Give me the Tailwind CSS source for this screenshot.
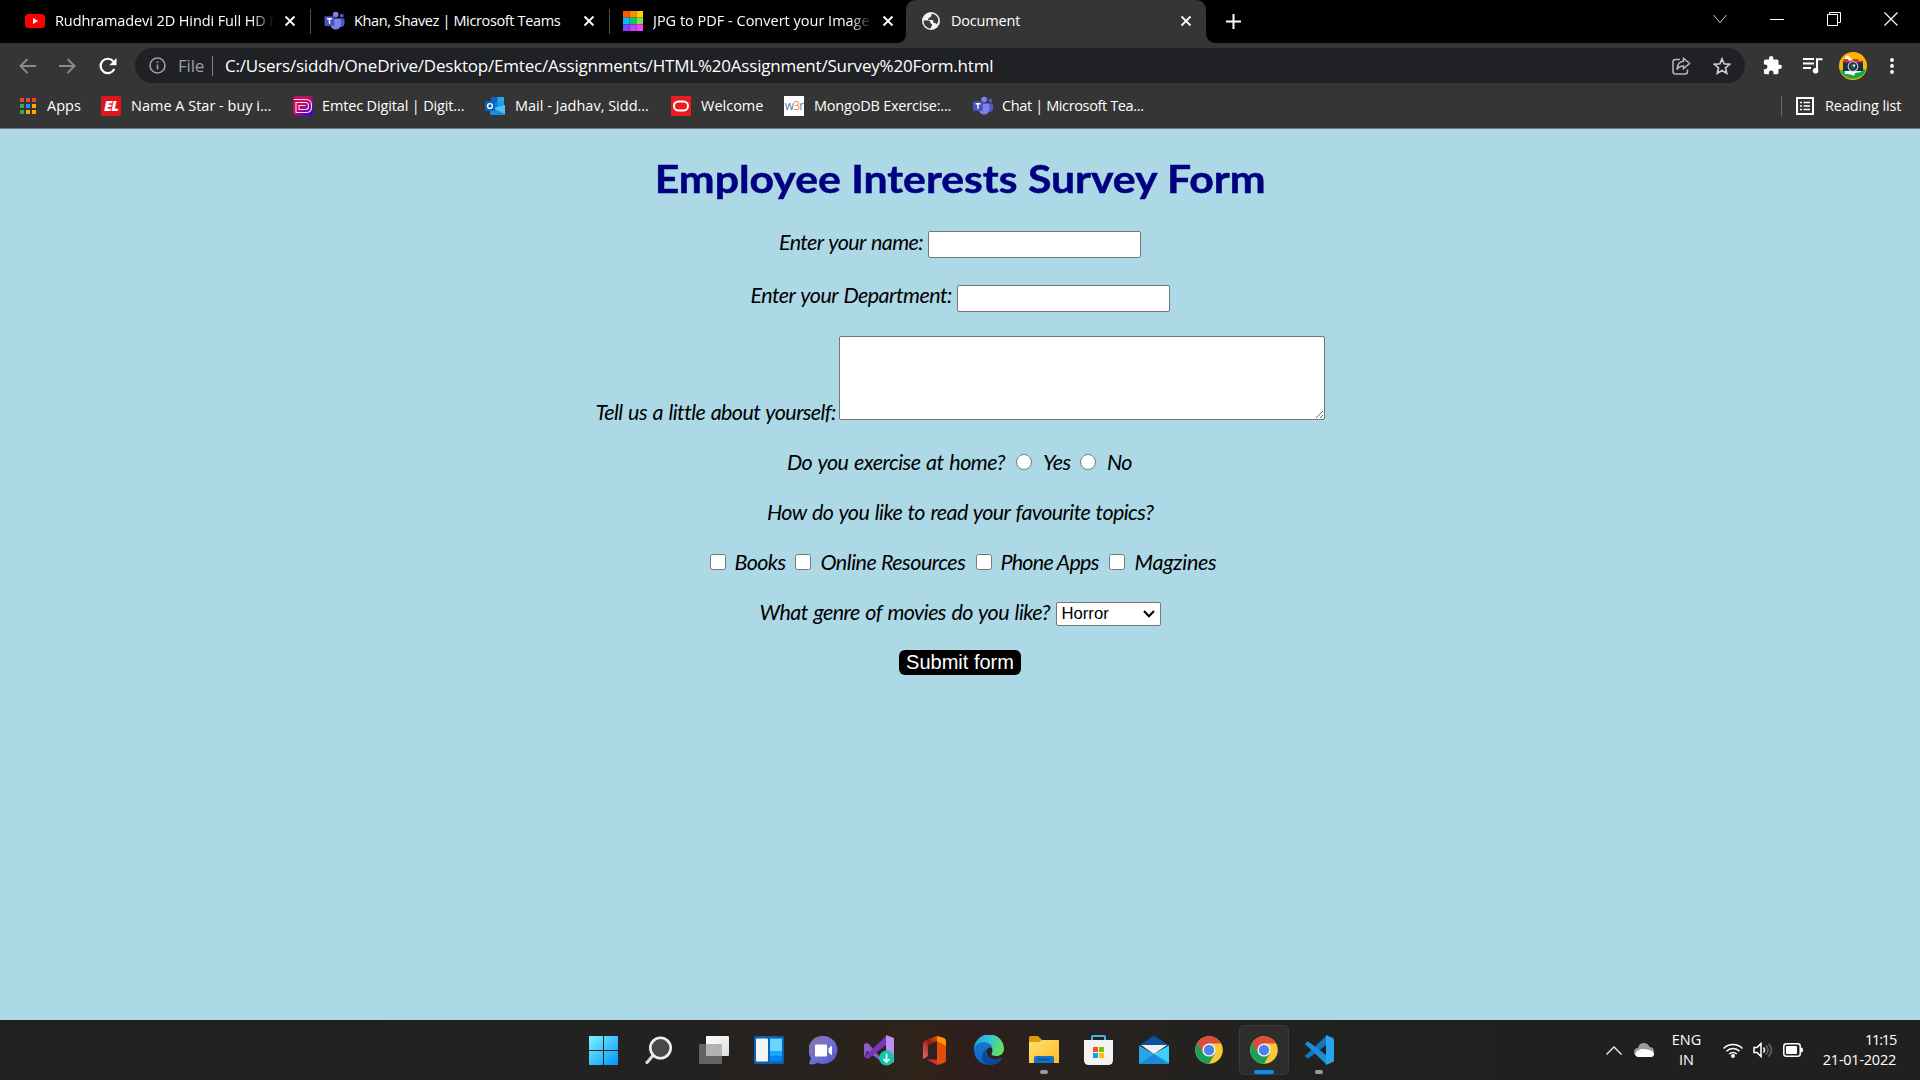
<!DOCTYPE html>
<html lang="en">
<head>
<meta charset="utf-8">
<title>Document</title>
<script src="https://cdn.jsdelivr.net/npm/@tailwindcss/browser@4"></script>
</head>
<body class="w-[1920px] h-[1080px] overflow-hidden flex flex-col bg-[#add8e6] font-['Open_Sans',sans-serif] text-white">

<svg class="hidden">
  <defs>
    <symbol id="teams" viewBox="0 0 20 20">
      <circle cx="17.3" cy="4.7" r="1.9" fill="#5059c9"/><path d="M14 7.6h5.2c.5 0 .8.3.8.8v4.4a3.2 3.2 0 0 1-5 2.6z" fill="#5059c9"/>
      <circle cx="11.2" cy="3.6" r="2.8" fill="#7b83eb"/><path d="M6.5 7.6h9c.5 0 .8.4.8.9v5.6a5.2 5.2 0 0 1-10.3 0z" fill="#7b83eb"/>
      <rect x="0" y="5.2" width="9.8" height="9.8" rx="1" fill="#4b53bc"/><path d="M2.6 7.8h4.8M5 7.8v5" stroke="#fff" stroke-width="1.4"/>
    </symbol>
    <symbol id="close" viewBox="0 0 12 12"><path d="M1.5 1.5l9 9M10.5 1.5l-9 9" stroke="#fff" stroke-width="1.8"/></symbol>
    <symbol id="chrome" viewBox="0 0 28 28">
      <circle cx="14" cy="14" r="13.8" fill="#f8c935"/>
      <path d="M14 14L2.05 7.1A13.8 13.8 0 0 0 14 27.8L20 17.4z" fill="#1c9f54"/>
      <path d="M14 7.5h12.2A13.8 13.8 0 0 0 2.05 7.1l6.1 10z" fill="#dd4b3e"/>
      <circle cx="14" cy="14" r="6.6" fill="#f4f6fb"/><circle cx="14" cy="14" r="5.2" fill="#4a86ee"/>
    </symbol>
  </defs>
</svg>

<!-- Tab strip -->
<div class="flex h-[43px] bg-black text-[14.5px] leading-[20px] shrink-0">
  <div class="flex w-[310px] h-[42px] items-center pl-[25px]">
    <svg class="w-5 h-[14px] shrink-0" viewBox="0 0 20 14"><rect width="20" height="14" rx="3.5" fill="#f00"/><path d="M8 4l5 3-5 3z" fill="#fff"/></svg>
    <span class="ml-[10px] w-[219px] overflow-hidden whitespace-nowrap tracking-[-0.1px] mask-r-from-90%">Rudhramadevi 2D Hindi Full HD M</span>
    <svg class="ml-[10px] w-3 h-3 shrink-0"><use href="#close"/></svg>
  </div>
  <div class="w-px h-[25px] mt-[9px] bg-[#505050]"></div>
  <div class="flex w-[298px] h-[42px] items-center pl-[13px]">
    <svg class="w-[21px] h-5 shrink-0"><use href="#teams"/></svg>
    <span class="ml-[9px] w-[219px] overflow-hidden whitespace-nowrap tracking-[-0.36px]">Khan, Shavez | Microsoft Teams</span>
    <svg class="ml-[10px] w-3 h-3 shrink-0"><use href="#close"/></svg>
  </div>
  <div class="w-px h-[25px] mt-[9px] bg-[#505050]"></div>
  <div class="flex w-[287px] h-[42px] items-center pl-[13px]">
    <svg class="w-5 h-5 shrink-0" viewBox="0 0 21 21"><path fill="#ff5a00" d="M0 0h7v7H0z"/><path fill="#ff8c00" d="M7 0h7v7H7z"/><path fill="#ffd000" d="M14 0h7v7h-7z"/><path fill="#00bfff" d="M0 7h7v7H0z"/><path fill="#00cc66" d="M7 7h7v7H7z"/><path fill="#7fe04c" d="M14 7h7v7h-7z"/><path fill="#8040ff" d="M0 14h7v7H0z"/><path fill="#bf40ff" d="M7 14h7v7H7z"/><path fill="#f040ff" d="M14 14h7v7h-7z"/></svg>
    <span class="ml-[10px] w-[219px] overflow-hidden whitespace-nowrap mask-r-from-90%">JPG to PDF - Convert your Image</span>
    <svg class="ml-[10px] w-3 h-3 shrink-0"><use href="#close"/></svg>
  </div>
  <div class="relative flex w-[309px] h-[43px] items-center pl-[25px] pb-px">
    <svg class="absolute left-0 top-0 w-[319px] h-[43px]" viewBox="0 0 319 43"><path d="M0 43c6 0 9-4 9-10V10C9 4 13 0 19 0h280c6 0 10 4 10 10v23c0 6 4 10 10 10z" fill="#353535"/></svg>
    <svg class="relative w-[18px] h-[18px] shrink-0" viewBox="0 0 18 18"><circle cx="9" cy="9" r="9" fill="#f4f4f4"/><path d="M1.600 8.500H6q2.500 0 2.500 2.200 0 1.300 1.500 1.300v1.500l-1 1.500v1.300C4.500 16.500 1.500 13 1.600 8.500zM9.500 1.800v1.700q0 1.500-2 1.500v1.500H6V8h4q1.500 0 1.500 1.500V11h1.500q1 0 1.500 1.500 2-2 1.900-4.500C16 4.500 13 2 9.500 1.800z" fill="#3c3c3c"/></svg>
    <span class="relative ml-[11px] w-[219px] overflow-hidden whitespace-nowrap tracking-[-0.2px]">Document</span>
    <svg class="relative ml-[10px] w-3 h-3 shrink-0"><use href="#close"/></svg>
  </div>
  <svg class="ml-[20px] mt-[14px] w-[15px] h-[15px]" viewBox="0 0 15 15"><path d="M7.500 0v15M0 7.500h15" stroke="#fff" stroke-width="2"/></svg>
  <div class="ml-auto flex h-[37px] items-center gap-[43px] pr-[22px]">
    <svg class="w-[14px] h-[14px]" viewBox="0 0 14 14" fill="none" stroke="#ccc"><path d="M.5 3L7 10.500 13.500 3"/></svg>
    <svg class="w-[14px] h-[14px]" viewBox="0 0 14 14" stroke="#fff"><path d="M0 7.500h14"/></svg>
    <svg class="w-[14px] h-[14px]" viewBox="0 0 14 14" fill="none" stroke="#fff"><path d="M.5 2.500h10v11H.5zM2.500 2.500V.5h11v10h-3"/></svg>
    <svg class="w-[14px] h-[14px]" viewBox="0 0 14 14" stroke="#fff" stroke-width="1.200"><path d="M.5.5l13 13M13.500.5l-13 13"/></svg>
  </div>
</div>

<!-- Address bar -->
<div class="flex h-[45px] items-center bg-[#353535] pl-[19px] shrink-0">
  <svg class="w-[17px] h-4" viewBox="0 0 17 16" fill="none" stroke="#8b8b8b" stroke-width="1.900"><path d="M17 8H1.500M8.500 1L1.500 8l7 7"/></svg>
  <svg class="ml-[23px] w-[17px] h-4" viewBox="0 0 17 16" fill="none" stroke="#8b8b8b" stroke-width="1.900"><path d="M0 8h15.500M8.500 1l7 7-7 7"/></svg>
  <svg class="ml-[23px] w-[18px] h-[18px]" viewBox="0 0 18 18" fill="none"><path d="M15.300 12A7.200 7.200 0 1 1 14.200 4.200" stroke="#fff" stroke-width="2.200"/><path d="M17.500 1v7.200h-7.200z" fill="#fff"/></svg>
  <div class="ml-[18px] flex w-[1610px] h-[35px] items-center rounded-full bg-[#202124] text-[17px] leading-[24px]">
    <svg class="ml-[14px] w-[17px] h-[17px]" viewBox="0 0 17 17" fill="none" stroke="#9aa0a6" stroke-width="1.600"><circle cx="8.500" cy="8.500" r="7.500"/><path d="M8.500 7.500v5M8.500 4.300v1.800"/></svg>
    <span class="ml-[12px] w-[26px] whitespace-nowrap tracking-[-0.2px] text-[#9aa0a6]">File</span>
    <div class="ml-[8px] w-px h-5 bg-[#80868b]"></div>
    <span class="ml-[12px] w-[768px] whitespace-nowrap tracking-[-0.2px]">C:/Users/siddh/OneDrive/Desktop/Emtec/Assignments/HTML%20Assignment/Survey%20Form.html</span>
    <svg class="ml-auto w-[19px] h-[18px]" viewBox="0 0 19 18" fill="none" stroke="#b8b8b8" stroke-width="1.500"><path d="M8 2.500H3.500Q1 2.500 1 5v9.500Q1 17 3.500 17h9.500q2.500 0 2.500-2.500V12.500"/><path d="M11.500 1.300L17.500 6.500l-6 5.200V8.900C8.500 8.900 6.500 10 5 12.500 5.300 8 7.500 4.500 11.500 4.200z"/></svg>
    <svg class="ml-[22px] mr-[14px] w-[18px] h-[18px]" viewBox="0 0 18 18" fill="none" stroke="#c8c8c8" stroke-width="1.700"><path d="M9 1.800l2.100 5 5.500.5-4.100 3.600 1.200 5.300L9 13.400l-4.700 2.800 1.200-5.300-4.100-3.600 5.500-.5z"/></svg>
  </div>
  <svg class="ml-[18px] w-[19px] h-[19px]" viewBox="1 1 22 22" fill="#fff"><path d="M20.500 11H19V7a2 2 0 0 0-2-2h-4V3.500a2.500 2.500 0 0 0-5 0V5H4a2 2 0 0 0-2 2v3.800h1.500a2.700 2.700 0 0 1 0 5.400H2V20a2 2 0 0 0 2 2h3.800v-1.500a2.700 2.700 0 0 1 5.400 0V22H17a2 2 0 0 0 2-2v-4h1.500a2.500 2.500 0 0 0 0-5z"/></svg>
  <svg class="ml-[21px] w-[20px] h-[18px]" viewBox="0 0 20 18"><path d="M0 2h11M0 6.500h11M0 11h8M14 13V2.200h5.500" stroke="#fff" stroke-width="2.100" fill="none"/><circle cx="12.600" cy="13.800" r="2.800" fill="#fff"/></svg>
  <svg class="ml-[16px] w-[28px] h-[28px]" viewBox="0 0 28 28"><circle cx="14" cy="14" r="14" fill="#ffb400"/><path d="M1 18q6 0 9 5l8-3q4-4 9-2a14 14 0 0 1-26 0z" fill="#0cab50"/><path d="M5 7l3-3.500 3 1.500 2 3 9 0 2 4-2 8-6 1-1 3-4-2-5 0z" fill="#fff"/><path d="M4 9h20v10H4z" fill="#13314b"/><path d="M4.500 7h4l1 1.500h4L14 7h5l1 1.500h3.500V11h-19z" fill="#d8323c"/><path d="M4 10.500h20v2H4z" fill="#13314b"/><circle cx="14" cy="14.500" r="4.800" fill="#13314b" stroke="#d9c7b2" stroke-width="1.100"/><circle cx="14" cy="14.500" r="2.600" fill="#27506e"/><circle cx="15" cy="13.500" r="1.300" fill="#e8e2c8"/></svg>
  <svg class="ml-[23px] w-1 h-4" viewBox="0 0 4 16" fill="#fff"><circle cx="2" cy="2" r="1.900"/><circle cx="2" cy="8" r="1.900"/><circle cx="2" cy="14" r="1.900"/></svg>
</div>

<!-- Bookmarks -->
<div class="flex h-[41px] items-center bg-[#353535] border-b border-[#70777a] pl-5 pb-1 text-[14.5px] leading-5 whitespace-nowrap shrink-0">
  <svg class="w-4 h-4" viewBox="0 0 16 16"><path fill="#ea4335" d="M0 0h4v4H0zM6 0h4v4H6zM12 0h4v4h-4z"/><path fill="#34a853" d="M0 6h4v4H0zM0 12h4v4H0z"/><path fill="#1a8cff" d="M6 6h4v4H6z"/><path fill="#fbab00" d="M12 6h4v4h-4zM6 12h4v4H6zM12 12h4v4h-4z"/></svg>
  <span class="ml-[11px] w-[34px]">Apps</span>
  <div class="ml-[20px] w-5 h-5 rounded-[2px] bg-[#e0161b] text-center font-['Open_Sans',sans-serif] text-[14.5px] font-extrabold italic leading-5 tracking-[-0.8px]">EL</div>
  <span class="ml-[10px] w-[140px]">Name A Star - buy i...</span>
  <svg class="ml-[22px] w-5 h-5" viewBox="0 0 20 20"><defs><linearGradient id="em" x1="0" y1="0" x2="1" y2="1"><stop offset=".4" stop-color="#c4105a"/><stop offset="1" stop-color="#2000f0"/></linearGradient></defs><rect width="20" height="20" rx="3" fill="url(#em)"/><path d="M1 3.500h12q5.500 0 5.500 5.500v2q0 5.500-5.500 5.500H3V6.500h9.500q3 0 3 3v1q0 3-3 3H6V9.500h6.500" fill="none" stroke="#ffd9ec" stroke-width="1.100"/></svg>
  <span class="ml-[9px] w-[142px] tracking-[-0.15px]">Emtec Digital | Digit...</span>
  <svg class="ml-[21px] w-5 h-[18px]" viewBox="0 0 20 18"><path d="M6 0h13v11H6z" fill="#0a66b8"/><path d="M12.500 0H19v6h-6.500z" fill="#28a8ea"/><path d="M6 5h6.500v6H6z" fill="#0f78d4"/><path d="M12.500 5H19v5h-6.500z" fill="#1b9de2"/><path d="M5 17V8l7.500 4L20 8v9q0 1-1 1H6q-1 0-1-1z" fill="#1490df"/><path d="M20 8v9l-12-6z" fill="#50c0f5"/><rect y="4" width="10" height="10" rx="1" fill="#0a64ba"/><circle cx="5" cy="9" r="2.400" fill="none" stroke="#fff" stroke-width="1.400"/></svg>
  <span class="ml-[10px] w-[135px]">Mail - Jadhav, Sidd...</span>
  <svg class="ml-[21px] w-5 h-5" viewBox="0 0 20 20"><path fill="#ea1b22" d="M0 0h20v20H0z"/><rect x="3" y="5.500" width="14" height="9" rx="4.500" fill="none" stroke="#fff" stroke-width="2"/></svg>
  <span class="ml-[10px] w-[62px]">Welcome</span>
  <div class="ml-[21px] w-5 h-5 bg-white text-center text-[12px] leading-[19px] tracking-[-0.8px] text-[#557aa8]">w<span class="text-[#ef8b4e]">3</span>r</div>
  <span class="ml-[10px] w-[137px] tracking-[-0.22px]">MongoDB Exercise:...</span>
  <svg class="ml-[22px] w-5 h-5"><use href="#teams"/></svg>
  <span class="ml-[9px] w-[143px] tracking-[-0.37px]">Chat | Microsoft Tea...</span>
  <div class="ml-auto w-px h-5 bg-[#6a6a6a]"></div>
  <svg class="ml-[14px] w-[18px] h-[18px]" viewBox="0 0 18 18" fill="none" stroke="#fff" stroke-width="2"><path d="M1 1h16v16H1z"/><path d="M4 5.500h2M4 9h2M4 12.500h2M7.500 5.500H14M7.500 9H14M7.500 12.500H14" stroke-width="1.700"/></svg>
  <span class="ml-[11px] w-[77px] mr-[18px] tracking-[-0.1px]">Reading list</span>
</div>

<!-- Survey page -->
<main class="flex grow flex-col pt-[21px] font-['Lato',sans-serif] text-[21.5px] italic leading-[22px] tracking-[-0.6px] [word-spacing:1.2px] text-black whitespace-nowrap">
  <h1 class="flex h-[56px] items-center justify-center text-[38.5px] font-bold not-italic leading-[56px] tracking-normal [word-spacing:0px] text-[#000080]"><span class="inline-block scale-x-[1.11] [-webkit-text-stroke:0.5px_#000080]">Employee Interests Survey Form</span></h1>
  <div class="mt-[25px] flex h-[53px] justify-center"><label class="w-[145px]">Enter your name:</label><input class="ml-[4px] w-[213px] h-[27px] rounded-[2px] border border-[#767676] bg-white"></div>
  <div class="flex h-[52px] justify-center"><label class="w-[202px] tracking-[-0.52px]">Enter your Department:</label><input class="ml-[4px] mt-px w-[213px] h-[27px] rounded-[2px] border border-[#767676] bg-white"></div>
  <div class="flex h-[115px] justify-center"><label class="mt-[65px] w-[240px]">Tell us a little about yourself:</label><textarea class="ml-[3px] w-[486px] h-[84px] rounded-[2px] border border-[#767676] bg-white resize"></textarea></div>
  <div class="flex h-[50px] justify-center"><span class="w-[217px] tracking-[-0.54px]">Do you exercise at home?</span><input type="radio" class="ml-[12px] mt-[3px] w-4 h-4"><label class="ml-[11px] w-[27px]">Yes</label><input type="radio" class="ml-[10px] mt-[3px] w-4 h-4"><label class="ml-[11px] w-[26px]">No</label></div>
  <div class="flex h-[50px] justify-center"><span class="w-[386px]">How do you like to read your favourite topics?</span></div>
  <div class="flex h-[50px] justify-center [word-spacing:0px]"><input type="checkbox" class="ml-[6px] mt-[3px] w-4 h-4"><label class="ml-[9px] w-[50px] tracking-[-0.6px]">Books</label><input type="checkbox" class="ml-[10px] mt-[3px] w-4 h-4"><label class="ml-[10px] w-[144px] tracking-[-0.48px]">Online Resources</label><input type="checkbox" class="ml-[11px] mt-[3px] w-4 h-4"><label class="ml-[9px] w-[98px] tracking-[-0.75px]">Phone Apps</label><input type="checkbox" class="ml-[10px] mt-[3px] w-4 h-4"><label class="ml-[10px] w-[82px] tracking-[-0.25px]">Magzines</label></div>
  <div class="flex h-[49px] justify-center"><span class="w-[290px] tracking-[-0.57px]">What genre of movies do you like?</span>
    <div class="ml-[6px] mt-px flex w-[105px] h-[24px] items-center justify-between rounded-[2px] border border-[#767676] bg-white pl-[5px] pr-[5px] font-['Liberation_Sans',sans-serif] text-[16.67px] not-italic tracking-normal"><span>Horror</span><svg class="w-[12px] h-[8px]" viewBox="0 0 12 8" fill="none" stroke="#000" stroke-width="2"><path d="M1 1l5 5.300L11 1"/></svg></div></div>
  <div class="flex justify-center"><button class="flex w-[122px] h-[25px] justify-center rounded-[6px] bg-black font-['Liberation_Sans',sans-serif] text-[20px] not-italic leading-[24px] tracking-normal [word-spacing:0px] text-white">Submit form</button></div>
</main>

<!-- Taskbar -->
<footer class="flex h-[60px] shrink-0 bg-[linear-gradient(90deg,#202020_0,#222221_600px,#26221f_800px,#2f2319_915px,#2e1f1d_970px,#28221f_1050px,#222220_1250px,#202020_1500px)]">
  <div class="ml-[576px] flex items-center [&>div]:flex [&>div]:w-[55px] [&>div]:h-[60px] [&>div]:items-center [&>div]:justify-center">
    <div><svg class="w-[29px] h-[29px]" viewBox="0 0 29 29"><defs><linearGradient id="wi" gradientUnits="userSpaceOnUse" x1="0" y1="0" x2="29" y2="29"><stop stop-color="#7df3ff"/><stop offset="1" stop-color="#0095f8"/></linearGradient></defs><path d="M0 0h14v14H0zM15 0h14v14H15zM0 15h14v14H0zM15 15h14v14H15z" fill="url(#wi)"/></svg></div>
    <div><svg class="w-[28px] h-[28px]" viewBox="0 0 28 28"><path d="M2 26.500L8 19.500" stroke="#d5d9db" stroke-width="3.200" stroke-linecap="round"/><circle cx="15.500" cy="12" r="10.200" fill="#484848" stroke="#eef0f0" stroke-width="2.600"/></svg></div>
    <div><svg class="w-[30px] h-[28px]" viewBox="0 0 30 28"><defs><linearGradient id="tv" x2="1" y2="1"><stop stop-color="#fff"/><stop offset="1" stop-color="#ddd"/></linearGradient></defs><rect y="8" width="23" height="20" rx="1" fill="#636363"/><rect x="7" width="23" height="20" rx="1" fill="url(#tv)"/><path d="M7 8h16v12H7z" fill="#b2b2b2"/></svg></div>
    <div><svg class="w-[30px] h-[28px]" viewBox="0 0 30 28"><rect width="30" height="28" rx="1.500" fill="#0b62b4"/><rect x="2" y="2.500" width="12" height="23" rx="1" fill="#f2f4f6"/><path d="M16 2.500h12V15H16z" fill="#66d5ff"/><path d="M16 15h12v5H16z" fill="#1ca5fb"/><path d="M16 20h12v5.500H16z" fill="#0485ee"/></svg></div>
    <div><svg class="w-[29px] h-[29px]" viewBox="0 0 29 29"><defs><linearGradient id="ch" x2="1" y2="1"><stop stop-color="#8c71a4"/><stop offset=".5" stop-color="#6f72cf"/><stop offset="1" stop-color="#5a50d0"/></linearGradient></defs><path d="M14.500 0a14 14 0 1 1-6 26.700C6 28.500 3 28.800 0 28l2-6A14 14 0 0 1 14.500 0z" fill="url(#ch)"/><rect x="6" y="8.500" width="12" height="12" rx="1" fill="#fff"/><path d="M19.500 12.500L23 9.500v10l-3.500-3z" fill="#fff"/></svg></div>
    <div><svg class="w-[30px] h-[31px]" viewBox="0 0 30 31"><path d="M0 9l3 2v9l-3 2z" fill="#52218a"/><path d="M0 22V9l4-1L22 29l-4-2L3 16z" fill="#865fc5"/><path d="M0 22L22 1v9L4 24z" fill="#7a36b8"/><path d="M22 0l8 3v24l-8 3z" fill="#bd8ff0"/><circle cx="22.500" cy="23" r="7.500" fill="#12c4aa"/><path d="M22.500 18.500v8M19.500 24l3 3 3-3" fill="none" stroke="#fff" stroke-width="1.600"/></svg></div>
    <div><svg class="w-[24px] h-[29px]" viewBox="0 0 24 29"><defs><linearGradient id="of" x1="1" x2="0" y2="1"><stop stop-color="#e04b10"/><stop offset=".4" stop-color="#9c1a12"/><stop offset="1" stop-color="#ef6a80"/></linearGradient></defs><path d="M15 0L5 3.500Q1 5 1 9v14l5-3V9l9-4z" fill="url(#of)"/><path d="M15 0l7 2q2 1 2 3v19q0 2-2 3l-7 2z" fill="#e34c09"/><path d="M15 0l7 2q2 1 2 3v5l-9-5z" fill="#f79400"/><path d="M5 23.500h10V29z" fill="#e0253a"/></svg></div>
    <div><svg class="w-[30px] h-[30px]" viewBox="0 0 30 30"><defs><linearGradient id="ed" x2="1" y2=".3"><stop stop-color="#1f9cdf"/><stop offset=".5" stop-color="#35c1dc"/><stop offset="1" stop-color="#62e160"/></linearGradient><linearGradient id="ee" x2="0" y2="1"><stop stop-color="#1678cf"/><stop offset="1" stop-color="#0d66c0"/></linearGradient></defs><path d="M0 15A15 15 0 0 1 30 13.500c0 5-3.500 7.500-8 7.500-3 0-4.500-1-4.500-2 0-.8 1-1.500 1-3.500 0-3-2.500-5.500-6-5.500z" fill="url(#ed)"/><path d="M0 15C0 10 5 7 10 7c4.500 0 8.500 3 8.500 7-3-3.500-7 0-6 4 1 4.500 6.500 8 13 5.500 1.500-.6 2.500-.5 2 .6C25 28 20 30 15 30A15 15 0 0 1 0 15z" fill="url(#ee)"/><path d="M15 30C7 29 6 19 11.500 14.200c-1.200 6 4 11.800 14 9.300 1.500-.6 2.500-.5 2 .6C25 28 20 30 15 30z" fill="#0b4a98"/></svg></div>
    <div class="relative"><svg class="w-[30px] h-[28px]" viewBox="0 0 30 28"><path d="M0 2q0-2 2-2h7l4 4v3H0z" fill="#dc9a06"/><defs><linearGradient id="fo" x2="1" y2="1"><stop stop-color="#ffe070"/><stop offset="1" stop-color="#fdbd24"/></linearGradient></defs><path d="M0 6h10l3-2h16q1 0 1 1v22H0z" fill="url(#fo)"/><path d="M5 27v-5q0-2 2-2h16q2 0 2 2v5z" fill="#1272c4"/><path d="M9 23.500h12" stroke="#0c4d94" stroke-width="1.500"/></svg><i class="absolute bottom-[6px] left-[24px] h-[4px] w-2 rounded-full bg-[#9b9b9b]"></i></div>
    <div><svg class="w-[29px] h-[30px]" viewBox="0 0 29 30"><path d="M8 6V2q0-1 1-1h11q1 0 1 1v4" fill="none" stroke="#35b9ef" stroke-width="2"/><path d="M0 5h29v20q0 5-5 5H5q-5 0-5-5z" fill="#f3f3f3"/><path d="M9 12h5v5H9z" fill="#f35325"/><path d="M15 12h5v5h-5z" fill="#81bc06"/><path d="M9 18h5v5H9z" fill="#05a6f0"/><path d="M15 18h5v5h-5z" fill="#ffba08"/></svg></div>
    <div><svg class="w-[30px] h-[28px]" viewBox="0 0 30 28"><path d="M0 9.500L13 .7q2-1.200 4 0L30 9.500z" fill="#0c4f9e"/><path d="M0 9.500L15 18l15-8.500V27q0 1-1 1H1q-1 0-1-1z" fill="#2aa5e6"/><path d="M2 9h26L15 18z" fill="#f0f0f0"/><path d="M15 18l15-8.500V27z" fill="#3fcdfa"/><path d="M0 28l15-10 15 10z" fill="#178bd8"/></svg></div>
    <div><svg class="w-[28px] h-[28px]"><use href="#chrome"/></svg></div>
    <div class="relative"><i class="absolute inset-x-[2.500px] top-[5px] h-[50px] rounded-[5px] border border-[#3a3a38] bg-[#2d2d2b]"></i><svg class="relative w-[28px] h-[28px]"><use href="#chrome"/></svg><i class="absolute bottom-[6px] left-[17.500px] h-[4px] w-5 rounded-full bg-[#0a8cf5]"></i></div>
    <div class="relative"><svg class="w-[30px] h-[30px]" viewBox="0 0 30 30"><path d="M2 20l20-19v9L5 23q-1 .8-2 0l-2-2q-.8-1 1-1z" fill="#1077bf"/><path d="M2 10q-1.500-.500-.8-1.500L3 7q1-.8 2 0l17 13v9z" fill="#1a8fd8"/><path d="M22 0l7 3q1 .5 1 1.500v21q0 1-1 1.500l-7 3z" fill="#2aa3ee"/></svg><i class="absolute bottom-[6px] left-[24px] h-[4px] w-2 rounded-full bg-[#9b9b9b]"></i></div>
  </div>
  <div class="ml-auto flex items-center pr-[24px] text-[14.5px] leading-[20px] whitespace-nowrap">
    <svg class="w-4 h-[9px]" viewBox="0 0 16 9" fill="none" stroke="#eee" stroke-width="1.300"><path d="M.5 8.500L8 1l7.500 7.500"/></svg>
    <svg class="ml-[12px] w-5 h-[14px]" viewBox="0 0 20 14"><path d="M4 13a4 4 0 0 1 0-8q1-5 6-5 4 0 5.500 4 4.500 0 4.500 5t-4 5z" fill="#9b9b9b"/><path d="M2 13q-2-2 1-5l4-2 3 0 6 1q4 2 4 4 0 3-3.500 3H4q-1 0-2-1z" fill="#fff"/></svg>
    <div class="ml-[18px] flex w-[29px] flex-col items-center"><span>ENG</span><span>IN</span></div>
    <svg class="ml-[22px] w-5 h-[15px]" viewBox="0 0 20 15" fill="none" stroke="#fff" stroke-width="1.500"><path d="M.6 5.500a13.300 13.300 0 0 1 18.800 0M3.400 8.300a9.300 9.300 0 0 1 13.200 0M6.200 11a5.400 5.400 0 0 1 7.600 0"/><circle cx="10" cy="13" r="1.200" fill="#fff"/></svg>
    <svg class="ml-[10px] w-5 h-[16px]" viewBox="0 0 20 16" fill="none" stroke="#fff" stroke-width="1.500"><path d="M1 5.500h3l4-4v13l-4-4H1zM10.500 5.500q2 2.500 0 5"/><path d="M13 3.500q4 4.500 0 9M15.500 1.500q6 6.500 0 13" stroke="#666"/></svg>
    <svg class="ml-[10px] w-5 h-[14px]" viewBox="0 0 20 14"><rect x=".8" y=".8" width="16.400" height="12.400" rx="2.500" fill="none" stroke="#fff" stroke-width="1.500"/><rect x="3" y="3" width="11" height="8" rx="1" fill="#fff"/><path d="M18 4.500q2 0 2 2v1q0 2-2 2z" fill="#fff"/></svg>
    <div class="ml-[21px] flex w-[72px] flex-col items-end"><span class="tracking-[-1.2px]">11:15</span><span class="tracking-[-0.25px]">21-01-2022</span></div>
  </div>
</footer>
</body>
</html>
